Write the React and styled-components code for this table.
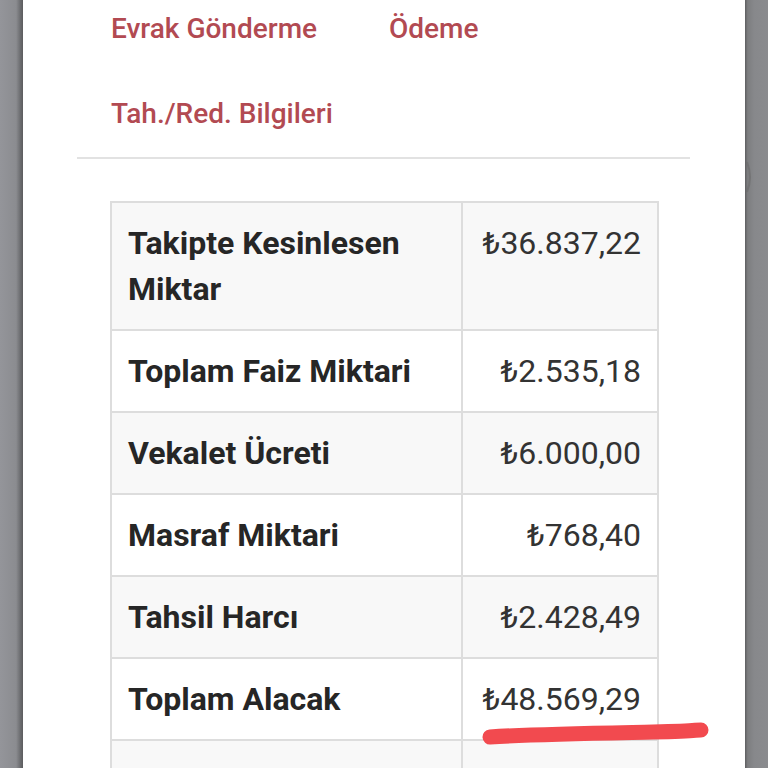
import styled, { createGlobalStyle } from "styled-components";

const rows = [
  { label: "Takipte Kesinlesen Miktar", value: "₺36.837,22" },
  { label: "Toplam Faiz Miktari", value: "₺2.535,18" },
  { label: "Vekalet Ücreti", value: "₺6.000,00" },
  { label: "Masraf Miktari", value: "₺768,40" },
  { label: "Tahsil Harcı", value: "₺2.428,49" },
  { label: "Toplam Alacak", value: "₺48.569,29", marked: true },
  { label: "Mevcut Borç", value: "₺38.264,13" },
];

const App = () => {
  return (
    <>
      <GlobalStyle />
      <Screen>
        <LeftEdge />
        <Panel>
          <Nav>
            <NavLink>Evrak Gönderme</NavLink>
            <NavLink>Ödeme</NavLink>
            <NavLink>Tah./Red. Bilgileri</NavLink>
          </Nav>
          <Divider />
          <Table>
            <tbody>
              {rows.map((r, i) => (
                <Row key={i} $striped={i % 2 === 0}>
                  <Label>{r.label}</Label>
                  <Value>
                    {r.value}
                    {r.marked && (
                      <Marker viewBox="0 0 232 24" width="232" height="24">
                        <path
                          d="M7 16 C 50 13, 120 12, 170 11 S 208 9, 218 9"
                          stroke="#f24a4f"
                          strokeWidth="15"
                          strokeLinecap="round"
                          fill="none"
                        />
                      </Marker>
                    )}
                  </Value>
                </Row>
              ))}
            </tbody>
          </Table>
        </Panel>
        <RightEdge>
          <Handle viewBox="0 0 8 34" width="8" height="34">
            <path d="M1 2 Q 7 17 1 32" stroke="#6b6b6b" strokeWidth="2" fill="none" />
          </Handle>
        </RightEdge>
      </Screen>
    </>
  );
};

export default App;

const GlobalStyle = createGlobalStyle`
  html, body {
    margin: 0;
    padding: 0;
    background: #8a8b8f;
  }
  body {
    font-family: Roboto, "Liberation Sans", sans-serif;
  }
`;

const Screen = styled.div`
  display: flex;
  height: 768px;
  width: 768px;
  overflow: hidden;
`;

const LeftEdge = styled.div`
  width: 23px;
  flex-shrink: 0;
  background: linear-gradient(to right, #94959a 0%, #8b8c90 70%, #6c6d70 88%, #5c5c5e 100%);
`;

const RightEdge = styled.div`
  width: 23px;
  flex-shrink: 0;
  position: relative;
  background: linear-gradient(to right, #5e5e60 0%, #7d7e80 12%, #87888b 40%, #8a8b8e 100%);
`;

const Handle = styled.svg`
  position: absolute;
  left: 1px;
  top: 160px;
  opacity: 0.6;
`;

const Panel = styled.div`
  flex: 1;
  background: #ffffff;
  position: relative;
  overflow: hidden;
`;

const Nav = styled.div`
  display: flex;
  flex-wrap: wrap;
  column-gap: 72px;
  row-gap: 27px;
  padding: 0 0 0 88px;
  width: 480px;
`;

const NavLink = styled.a`
  display: block;
  height: 58px;
  line-height: 58px;
  font-size: 28px;
  font-weight: 500;
  color: #b24a52;
  cursor: pointer;
`;

const Divider = styled.div`
  height: 2px;
  background: #e2e2e2;
  margin: 14px 55px 0 54px;
`;

const Table = styled.table`
  margin: 42px 0 0 87px;
  width: 549px;
  border-collapse: collapse;
  border: 2px solid #dddddd;
  font-size: 32px;
  line-height: 46px;
  color: #262626;
`;

const Row = styled.tr`
  background: ${(p) => (p.$striped ? "#f8f8f8" : "#ffffff")};
`;

const Label = styled.td`
  width: 317px;
  padding: 17px 16px;
  border: 2px solid #dddddd;
  font-weight: 700;
  vertical-align: top;
`;

const Value = styled.td`
  position: relative;
  padding: 17px 16px;
  border: 2px solid #dddddd;
  text-align: right;
  font-weight: 400;
  color: #333333;
  vertical-align: top;
  white-space: nowrap;
`;

const Marker = styled.svg`
  position: absolute;
  left: 20px;
  top: 62px;
  overflow: visible;
`;
